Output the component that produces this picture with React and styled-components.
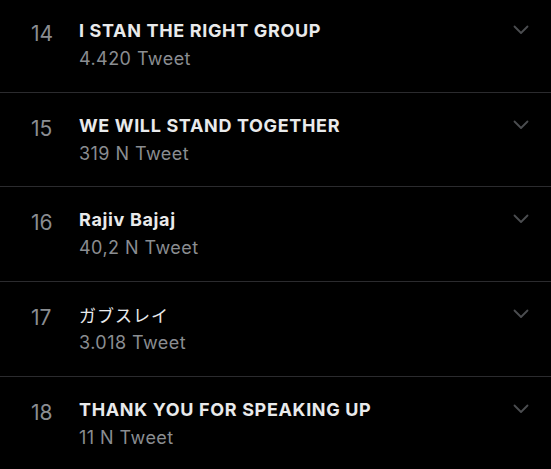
import styled, { createGlobalStyle } from "styled-components"

const GlobalStyle = createGlobalStyle`
    html, body {
        margin: 0;
        padding: 0;
        background: #000000;
    }
    body {
        font-family: Inter, "Liberation Sans", "Noto Sans CJK JP", sans-serif;
        -webkit-font-smoothing: antialiased;
    }
`

const trends = [
    { rank: 14, name: "I STAN THE RIGHT GROUP", count: "4.420 Tweet" },
    { rank: 15, name: "WE WILL STAND TOGETHER", count: "319 N Tweet" },
    { rank: 16, name: "Rajiv Bajaj", count: "40,2 N Tweet" },
    { rank: 17, name: "ガブスレイ", count: "3.018 Tweet", cjk: true },
    { rank: 18, name: "THANK YOU FOR SPEAKING UP", count: "11 N Tweet" },
]

const Chevron = () => (
    <svg width="16" height="10" viewBox="0 0 16 10" fill="none">
        <path d="M1.5 1.5 L8 8 L14.5 1.5" stroke="#4b4d50" strokeWidth="1.8" strokeLinecap="round" strokeLinejoin="round" />
    </svg>
)

const App = () => {
    return (
        <>
            <GlobalStyle />
            <List>
                {trends.map((t) => (
                    <Row key={t.rank}>
                        <Rank>{t.rank}</Rank>
                        <Info>
                            <Title $cjk={t.cjk}>{t.name}</Title>
                            <Count>{t.count}</Count>
                        </Info>
                        <More>
                            <Chevron />
                        </More>
                    </Row>
                ))}
            </List>
        </>
    )
}

// Styles
const List = styled.div`
    display: flex;
    flex-direction: column;
    width: 551px;
    height: 469px;
    overflow: hidden;
    margin-top: -2px;
`
const Row = styled.div`
    display: flex;
    align-items: flex-start;
    height: 94.7px;
    flex-shrink: 0;
    padding: 22px 0 0 31px;
    box-sizing: border-box;
    border-bottom: 1px solid #2b2b2e;
`
const Rank = styled.span`
    width: 48px;
    flex-shrink: 0;
    color: #8a8d91;
    font-size: 21px;
    line-height: 28px;
    margin-top: 0;
`
const Info = styled.div`
    display: flex;
    flex-direction: column;
    gap: 6px;
    flex: 1;
`
const Title = styled.span`
    color: #e9eaeb;
    font-size: ${(p) => (p.$cjk ? "17px" : "18px")};
    font-weight: ${(p) => (p.$cjk ? 400 : 700)};
    font-family: ${(p) => (p.$cjk ? '"Noto Sans CJK JP", sans-serif' : 'Inter, "Liberation Sans", sans-serif')};
    letter-spacing: ${(p) => (p.$cjk ? "1px" : "0.65px")};
    line-height: 22px;
`
const Count = styled.span`
    color: #8a8d91;
    font-size: 18px;
    letter-spacing: 0.45px;
    line-height: 22px;
`
const More = styled.div`
    display: flex;
    width: 16px;
    margin: 5px 22px 0 0;
`

export default App
